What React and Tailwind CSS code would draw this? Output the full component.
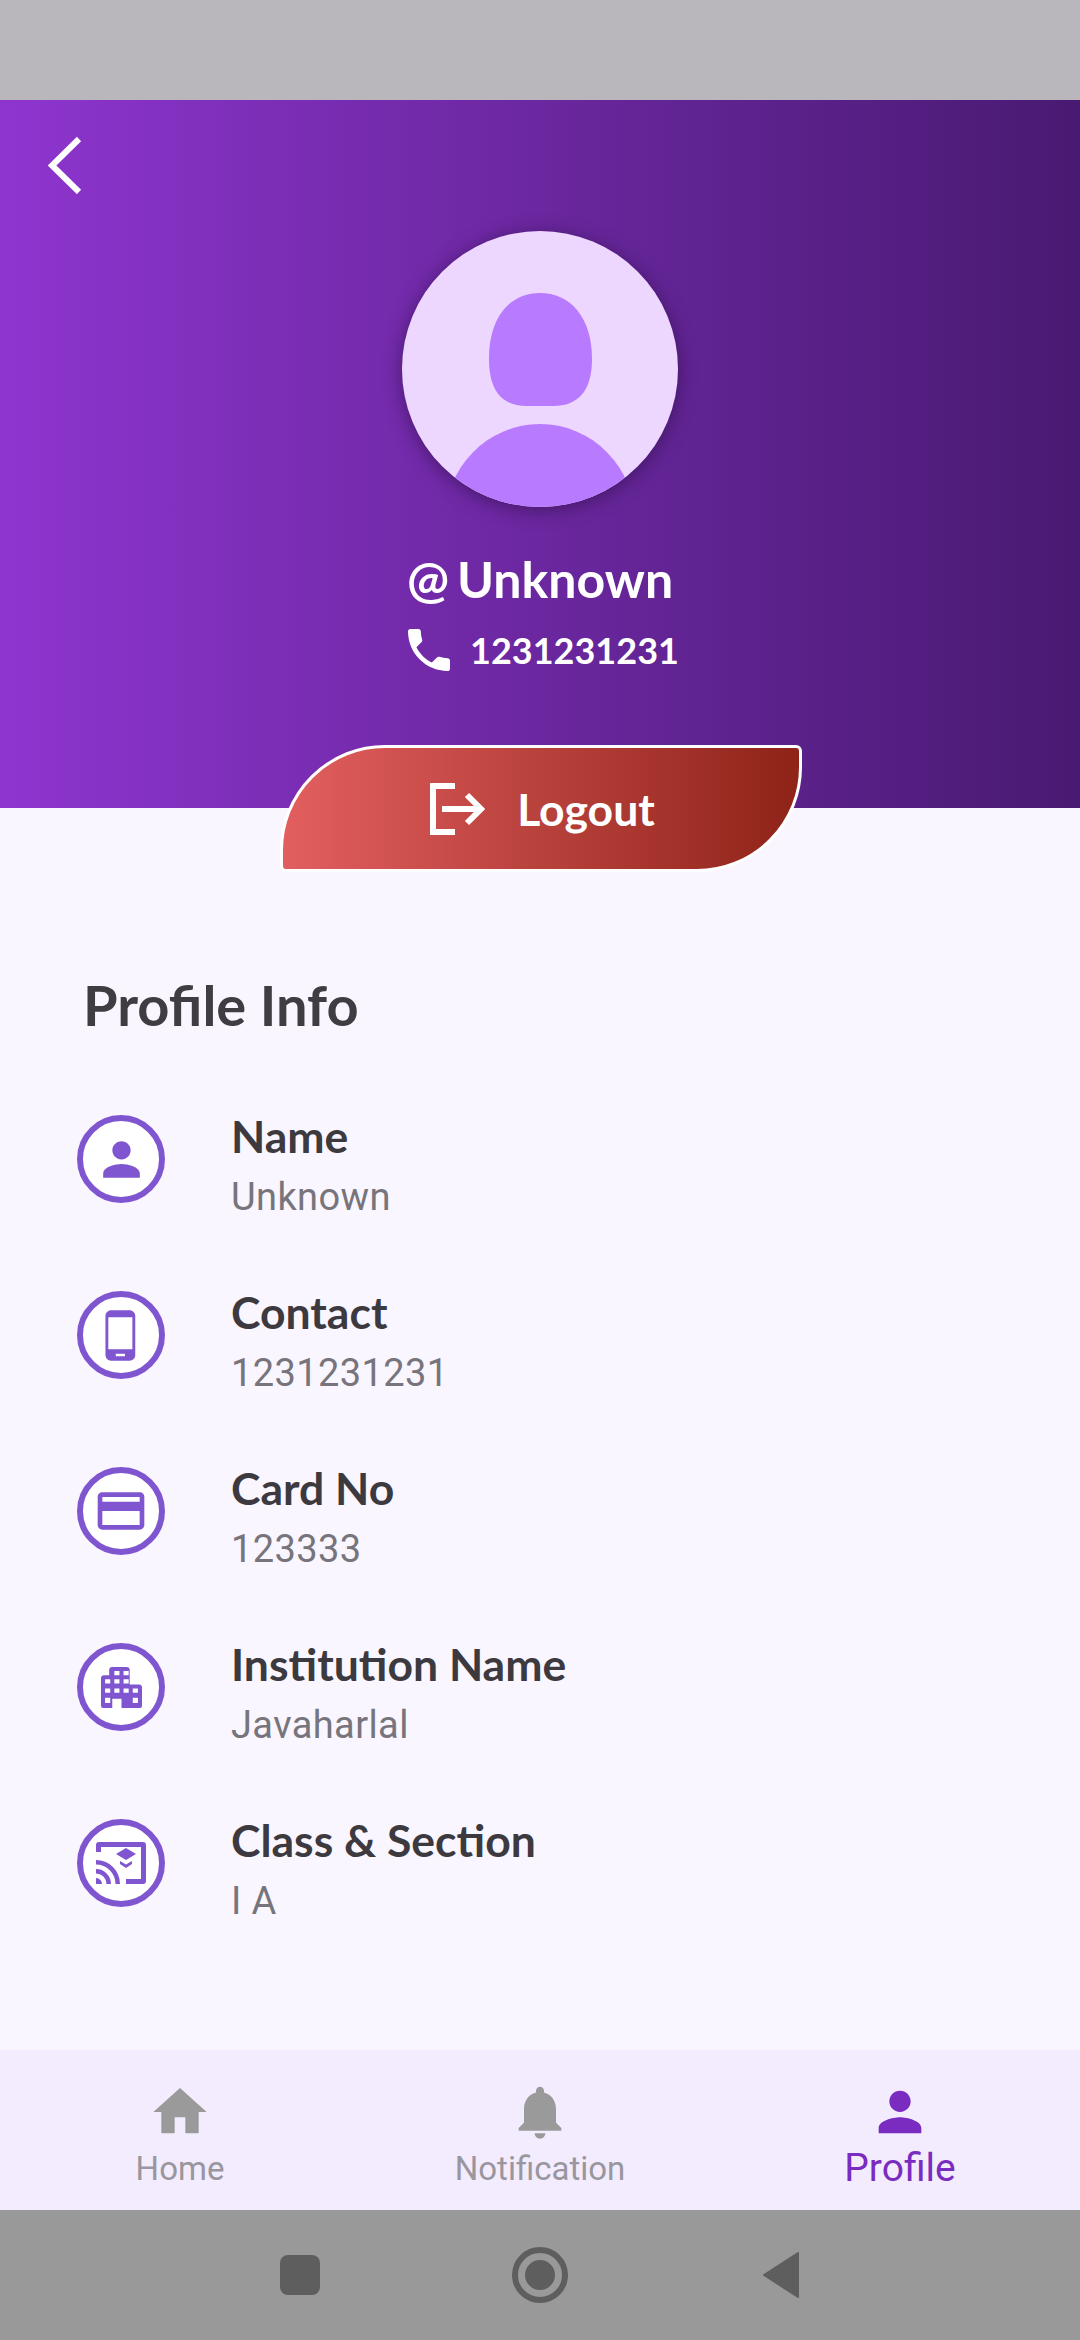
import React from "react";

const rows = [
  { label: "Name", value: "Unknown", icon: "person" },
  { label: "Contact", value: "1231231231", icon: "phone" },
  { label: "Card No", value: "123333", icon: "card" },
  { label: "Institution Name", value: "Javaharlal", icon: "building" },
  { label: "Class & Section", value: "I A", icon: "cast" },
];

function RowIcon({ name }) {
  if (name === "person") {
    return (
      <svg viewBox="0 0 24 24" className="w-[55px] h-[55px] fill-[#7f56d0]">
        <path d="M12 12c2.21 0 4-1.79 4-4s-1.79-4-4-4-4 1.79-4 4 1.79 4 4 4zm0 2c-2.67 0-8 1.34-8 4v2h16v-2c0-2.66-5.33-4-8-4z" />
      </svg>
    );
  }
  if (name === "phone") {
    return (
      <svg viewBox="0 0 24 24" className="w-[55px] h-[55px] fill-[#7f56d0]">
        <path d="M15.5 1h-8C6.12 1 5 2.12 5 3.5v17C5 21.88 6.12 23 7.5 23h8c1.38 0 2.5-1.12 2.5-2.5v-17C18 2.12 16.88 1 15.5 1zm-2 20h-4v-1h4v1zm3.25-3H6.25V4h10.5v14z" />
      </svg>
    );
  }
  if (name === "card") {
    return (
      <svg viewBox="0 0 24 24" className="w-[56px] h-[56px] fill-[#7f56d0]">
        <path d="M20 4H4c-1.11 0-1.99.89-1.99 2L2 18c0 1.11.89 2 2 2h16c1.11 0 2-.89 2-2V6c0-1.11-.89-2-2-2zm0 14H4v-6h16v6zm0-10H4V6h16v2z" />
      </svg>
    );
  }
  if (name === "building") {
    return (
      <svg viewBox="0 0 40 40" className="w-[41px] h-[41px] fill-[#7f56d0]">
        <path
          fillRule="evenodd"
          d="M11 0h14a3 3 0 0 1 3 3v14h9a3 3 0 0 1 3 3v18a2 2 0 0 1-2 2H20V31h-9v9H2a2 2 0 0 1-2-2V11a3 3 0 0 1 3-3h5V3a3 3 0 0 1 3-3zM13 4v4h5V4h-5zm9 0v4h5V4h-5zM4 12v4h5v-4H4zm9 0v4h5v-4h-5zm9 0v4h5v-4h-5zM4 21v4h5v-4H4zm9 0v4h5v-4h-5zm9 0v4h5v-4h-5zm9 0v4h5v-4h-5zM4 30v5h5v-5H4zm27 0v5h5v-5h-5z"
        />
      </svg>
    );
  }
  return (
    <svg viewBox="0 0 50 42" className="w-[50px] h-[42px] fill-[#7f56d0]">
      <path d="M3 0h44a3 3 0 0 1 3 3v36a3 3 0 0 1-3 3H30v-5h15V5H5v5H0V3a3 3 0 0 1 3-3z" />
      <path d="M0 36a6 6 0 0 1 6 6H0v-6zM0 27a15 15 0 0 1 15 15h-4.500A10.500 10.500 0 0 0 0 31.500V27zM0 18a24 24 0 0 1 24 24h-4.500A19.500 19.500 0 0 0 0 22.500V18z" />
      <path d="M30 6l10 6-10 6-10-6 10-6zM24 19l6 3.500 6-3.500v3l-6 4-6-4v-3z" />
    </svg>
  );
}

function InfoRow({ row }) {
  return (
    <div className="h-[176px] flex">
      <div className="ml-[1px] w-[88px] h-[88px] rounded-full border-[6px] border-[#7f56d0] bg-white flex items-center justify-center mt-[7px] shrink-0">
        <RowIcon name={row.icon} />
      </div>
      <div className="ml-[66px] flex flex-col">
        <span className="font-['Lato'] font-bold text-[44.5px] leading-[56px] text-[#3c3a3f]">{row.label}</span>
        <span className="font-['Roboto'] text-[38px] leading-[48px] tracking-[0.4px] text-[#77747c] mt-[9px]">{row.value}</span>
      </div>
    </div>
  );
}

function NavItem({ label, active, children }) {
  return (
    <div className="flex-1 flex flex-col items-center pt-[30px]">
      <div className="h-[64px] flex items-center justify-center">{children}</div>
      <span
        className={
          active
            ? "font-['Roboto'] text-[39px] leading-[44px] mt-[2px] text-[#7b2cc0]"
            : "font-['Roboto'] text-[33px] leading-[44px] mt-[3px] text-[#99969e]"
        }
      >
        {label}
      </span>
    </div>
  );
}

export default function App() {
  return (
    <div className="w-[1080px] h-[2340px] flex flex-col bg-[#f9f6ff] overflow-hidden font-['Lato',sans-serif]">
      <div className="h-[100px] bg-[#b9b7bc] shrink-0" />

      <div className="h-[708px] shrink-0 bg-gradient-to-r from-[#8e35cf] to-[#491a72] flex flex-col items-center relative">
        <button className="absolute left-[46px] top-[36px]">
          <svg viewBox="0 0 36 58" className="w-[36px] h-[58px] stroke-white fill-none">
            <path d="M33 3 L6 29.5 L33 56" strokeWidth="6" />
          </svg>
        </button>

        <div className="mt-[131px] w-[276px] h-[276px] rounded-full bg-[#eed7ff] shadow-[0_3px_18px_rgba(30,10,50,0.5)] overflow-hidden shrink-0">
          <svg viewBox="0 0 276 276" className="w-full h-full fill-[#b87aff]">
            <path d="M138 62C108 62 87 86 87 128C87 160 100 175 125 175H151C176 175 190 160 190 128C190 86 168 62 138 62z" />
            <ellipse cx="138" cy="290" rx="95" ry="97" />
          </svg>
        </div>

        <div className="mt-[42px] flex items-baseline text-white font-bold text-[50px] leading-[60px]">
          <span className="mr-[8px]">@</span>
          <span>Unknown</span>
        </div>

        <div className="mt-[13px] flex items-center text-white">
          <svg viewBox="0 0 24 24" className="w-[56px] h-[56px] fill-white">
            <path d="M6.62 10.79c1.44 2.83 3.76 5.14 6.59 6.59l2.2-2.2c.27-.27.67-.36 1.02-.24 1.12.37 2.33.57 3.57.57.55 0 1 .45 1 1V20c0 .55-.45 1-1 1-9.39 0-17-7.61-17-17 0-.55.45-1 1-1h3.500c.55 0 1 .45 1 1 0 1.250.2 2.450.57 3.570.11.35.03.74-.25 1.020l-2.200 2.200z" />
          </svg>
          <span className="ml-[13px] font-bold text-[36px] leading-[48px]">1231231231</span>
        </div>
      </div>

      <div className="self-start ml-[280px] -mt-[63px] relative w-[522px] h-[127px] shrink-0 rounded-tl-[105px] rounded-br-[105px] rounded-tr-[6px] rounded-bl-[6px] border-[3px] border-white bg-gradient-to-r from-[#e35f5f] to-[#8f2318] flex items-center justify-center">
        <svg viewBox="0 0 56 52" className="w-[56px] h-[52px] fill-none stroke-white ml-[2px]" strokeWidth="6">
          <path d="M26 3H4v46h22" />
          <path d="M13 26h39M38 12l14 14-14 14" />
        </svg>
        <span className="ml-[32px] text-white font-bold text-[44.5px] leading-[56px]">Logout</span>
      </div>

      <div className="flex-1 pl-[76px] pt-[101px]">
        <h2 className="ml-[7px] font-bold text-[56px] leading-[64px] text-[#3f3c42]">Profile Info</h2>
        <div className="mt-[71px]">
          {rows.map((row) => (
            <InfoRow key={row.label} row={row} />
          ))}
        </div>
      </div>

      <div className="h-[160px] bg-[#f3ecfe] flex shrink-0">
        <NavItem label="Home">
          <svg viewBox="0 0 24 24" className="w-[64px] h-[64px] fill-[#9a9a9a]">
            <path d="M10 20v-6h4v6h5v-8h3L12 3 2 12h3v8z" />
          </svg>
        </NavItem>
        <NavItem label="Notification">
          <svg viewBox="0 0 24 24" className="w-[64px] h-[64px] fill-[#9a9a9a]">
            <path d="M12 22c1.100 0 2-.9 2-2h-4c0 1.100.89 2 2 2zm6-6v-5c0-3.070-1.640-5.640-4.500-6.320V4c0-.83-.67-1.500-1.500-1.500s-1.500.67-1.500 1.500v.68C7.630 5.360 6 7.920 6 11v5l-2 2v1h16v-1l-2-2z" />
          </svg>
        </NavItem>
        <NavItem label="Profile" active>
          <svg viewBox="0 0 24 24" className="w-[64px] h-[64px] fill-[#7b2cc0]">
            <path d="M12 12c2.210 0 4-1.790 4-4s-1.790-4-4-4-4 1.790-4 4 1.790 4 4 4zm0 2c-2.670 0-8 1.340-8 4v2h16v-2c0-2.660-5.330-4-8-4z" />
          </svg>
        </NavItem>
      </div>

      <div className="h-[130px] bg-[#999999] shrink-0 flex items-center justify-center">
        <div className="w-[40px] h-[40px] rounded-[8px] bg-[#5e5e5e]" />
        <div className="ml-[192px] w-[56px] h-[56px] rounded-full border-[6px] border-[#5e5e5e] flex items-center justify-center">
          <div className="w-[30px] h-[30px] rounded-full bg-[#5e5e5e]" />
        </div>
        <svg viewBox="0 0 38 48" className="ml-[194px] w-[38px] h-[48px] fill-[#5e5e5e]">
          <path d="M36 2 L2 24 L36 46z" strokeLinejoin="round" stroke="#5e5e5e" strokeWidth="2" />
        </svg>
      </div>
    </div>
  );
}
